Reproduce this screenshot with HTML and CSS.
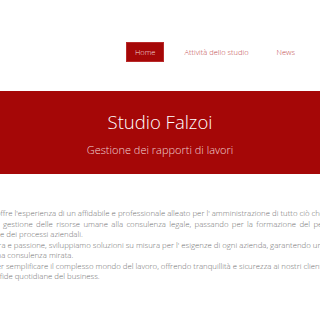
FILE: index.html
```html
<!doctype html>
<html>
	<head>
		<title>Studio Falzoi</title>
		<meta charset="utf-8"/>
		<link rel="stylesheet" href="styles.css">
	</head>
	<body>
		<div class="header">
			<div class="nav">
				<a class="navLink active" href="#">Home</a>
				<a class="navLink" href="#">Attività dello studio</a>
				<a class="navLink" href="#">News</a>
			</div>
		</div>

		<div class="band">
			<h1 class="title">Studio Falzoi</h1>
			<h2 class="subtitle">Gestione dei rapporti di lavori</h2>
		</div>

		<div class="content">
			<p>
				<span class="line full cut-s">offre l'esperienza di un affidabile e professionale alleato per l' amministrazione di tutto ciò che</span>
				<span class="line wide shift">gestione delle risorse umane alla consulenza legale, passando per la formazione del personale</span>
				<span class="line">e dei processi aziendali.</span>
			</p>
			<p>
				<span class="line cut-l">Con cura e passione, sviluppiamo soluzioni su misura per l' esigenze di ogni azienda, garantendo una</span>
				<span class="line cut-m">una consulenza mirata.</span>
			</p>
			<p>
				<span class="line cut-m">per semplificare il complesso mondo del lavoro, offrendo tranquillità e sicurezza ai nostri clienti nelle</span>
				<span class="line cut-s">sfide quotidiane del business.</span>
			</p>
		</div>
	</body>
</html>
```

FILE: styles.css
```css
*{
	padding:0;margin:0;
	font-family:"Open Sans", sans-serif;
}

body{
	width:320px;
	overflow:hidden;
	background-color:#fff;
}

.header{
	padding:42px 17px 29px 0;
}

.nav{
	display:flex;
	justify-content:flex-end;
	gap:12px;
}

.navLink{
	display:block;
	height:20px;
	line-height:20px;
	padding:0 8px;
	font-size:7.5px;
	font-weight:300;
	color:#c0484a;
	text-decoration:none;
	box-sizing:border-box;
}

.navLink.active{
	background-color:#a50707;
	border:1px solid #b82a2a;
	line-height:18px;
	color:#f4dede;
}

.band{
	background-color:#a50707;
	height:83px;
	display:flex;
	flex-direction:column;
	align-items:center;
	padding-top:19px;
	box-sizing:border-box;
}

.title{
	font-size:18.5px;
	font-weight:300;
	color:#fff;
	line-height:24px;
}

.subtitle{
	font-size:11px;
	font-weight:300;
	color:#f0d4d4;
	margin-top:8px;
	line-height:15px;
}

.content{
	width:318px;
	margin-top:34px;
}

.content p{
	font-size:7.8px;
	font-weight:300;
	line-height:10.5px;
	color:#707070;
}

.line{
	display:block;
	white-space:nowrap;
}

.line.full{
	text-align:justify;
	text-align-last:justify;
}

.line.wide{
	word-spacing:1.3px;
}

.shift{
	text-indent:3px;
}

.cut-s{
	text-indent:-4px;
}

.cut-m{
	text-indent:-8px;
}

.cut-l{
	text-indent:-26px;
}
```
